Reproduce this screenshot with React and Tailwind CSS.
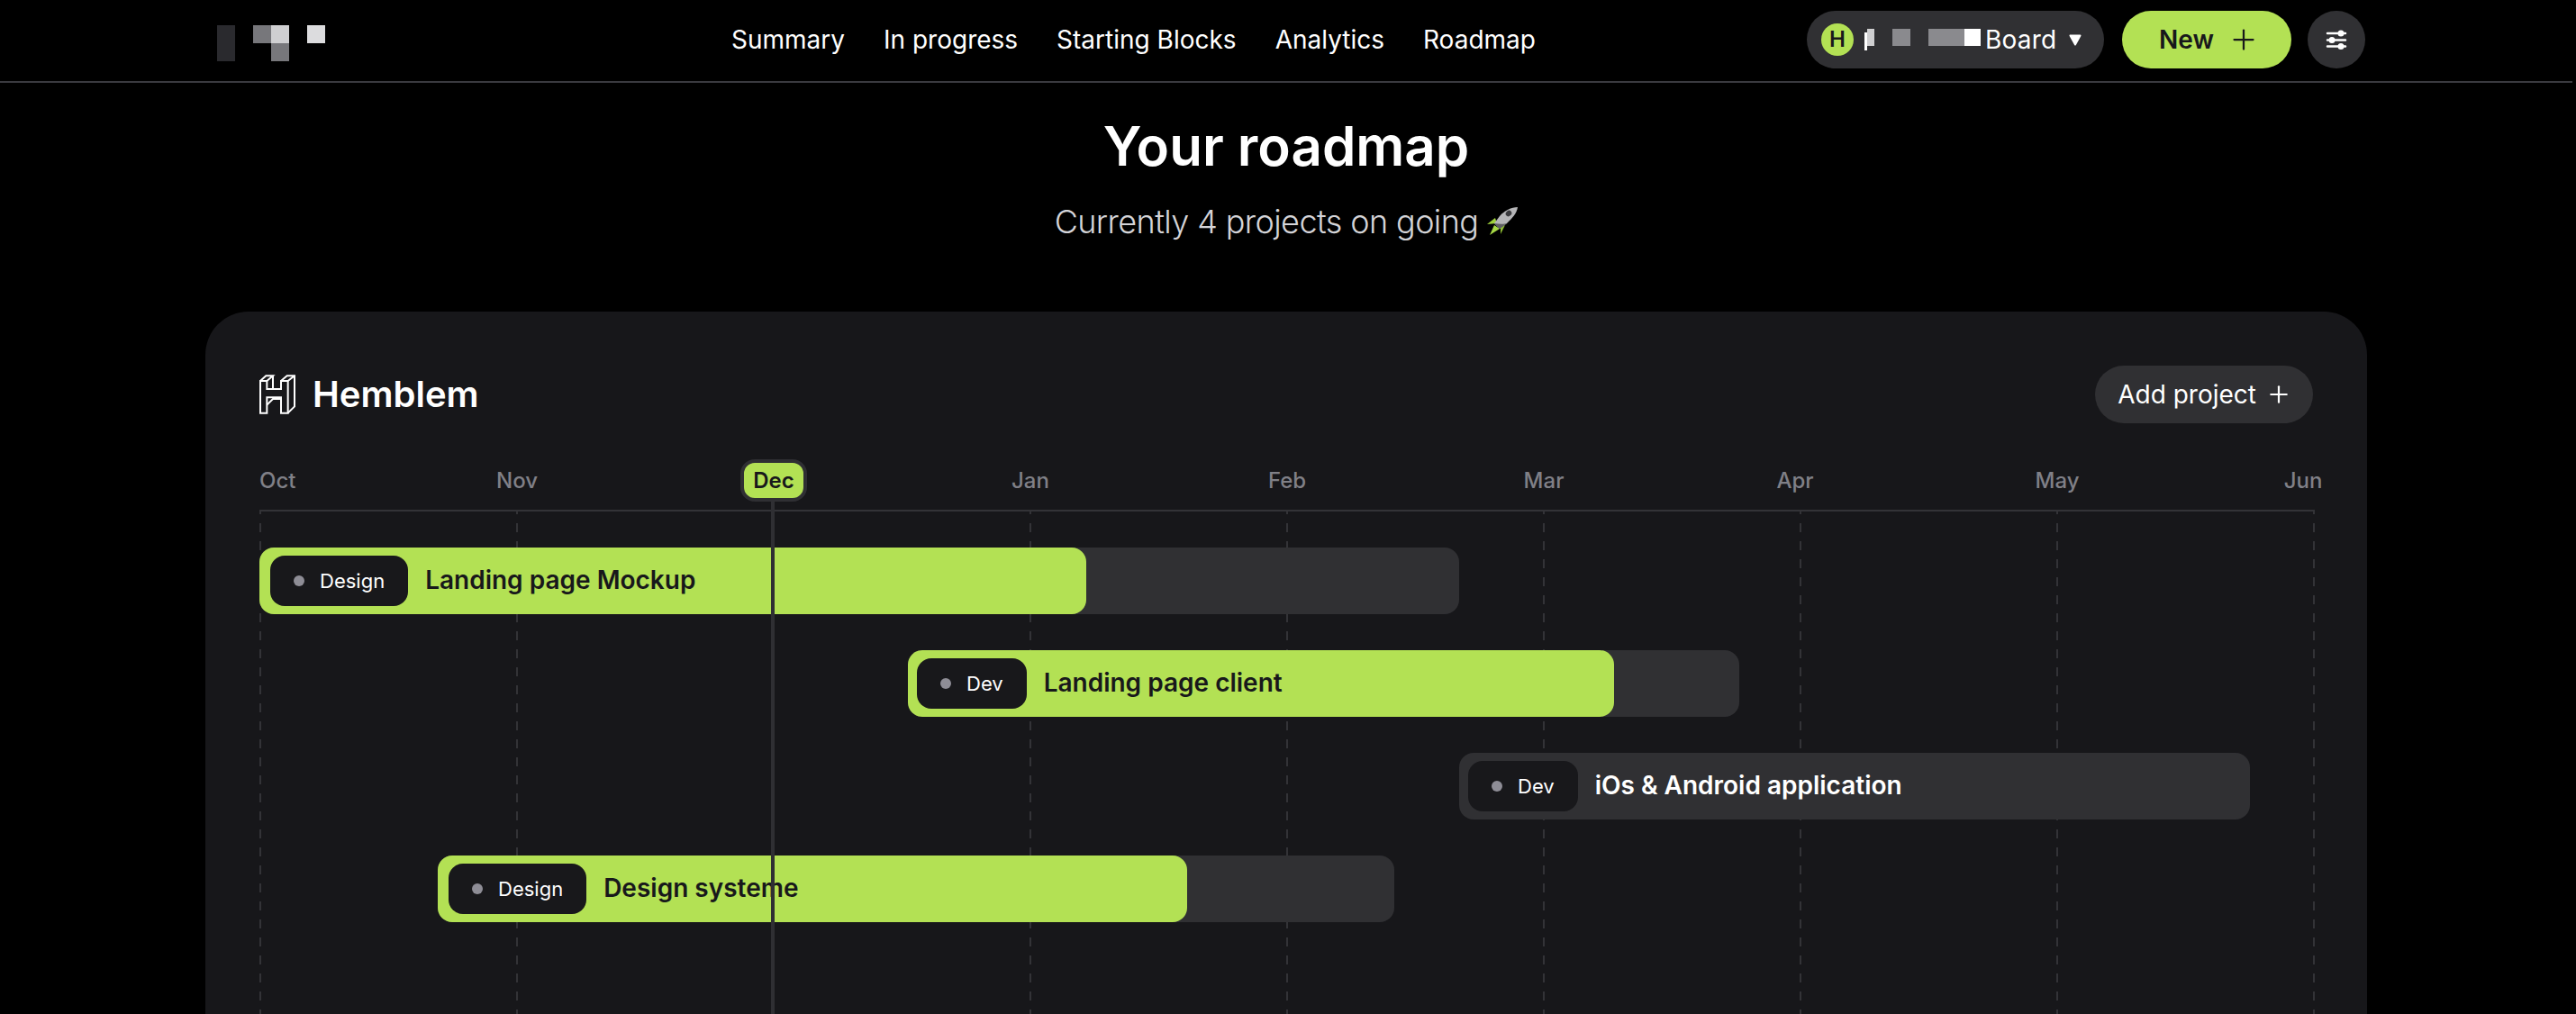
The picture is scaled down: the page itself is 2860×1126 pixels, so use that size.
import { Plus } from 'lucide-react'

const navLinks = ['Summary', 'In progress', 'Starting Blocks', 'Analytics', 'Roadmap']

const months = [
    { name: 'Oct', align: 'justify-start' },
    { name: 'Nov', align: 'justify-center' },
    { name: 'Dec', align: 'justify-center', current: true },
    { name: 'Jan', align: 'justify-center' },
    { name: 'Feb', align: 'justify-center' },
    { name: 'Mar', align: 'justify-center' },
    { name: 'Apr', align: 'justify-center -translate-x-1.5' },
    { name: 'May', align: 'justify-center' },
    { name: 'Jun', align: 'justify-center -translate-x-3' },
]

const projects = [
    { tag: 'Design', title: 'Landing page Mockup', start: 0, width: 1332, done: 918, inset: 'pl-3' },
    { tag: 'Dev', title: 'Landing page client', start: 720, width: 923, done: 784, inset: 'pl-2.5' },
    { tag: 'Dev', title: 'iOs & Android application', start: 1332, width: 878, done: 0, inset: 'pl-2.5' },
    { tag: 'Design', title: 'Design systeme', start: 198, width: 1062, done: 832, inset: 'pl-3' },
]

function Logo() {
    return (
        <div className="flex items-start mt-4 ml-[13px]">
            <div className="w-5 h-10 bg-[#2a2a2e]" />
            <div className="w-5 h-5 ml-5 bg-[#77777b]" />
            <div className="w-5">
                <div className="h-5 bg-[#cfcfd1]" />
                <div className="h-5 bg-[#77777b]" />
            </div>
            <div className="w-5 h-5 ml-5 bg-[#dcdcde]" />
        </div>
    )
}

function BoardSwitcher() {
    return (
        <button className="flex items-center h-16 w-[330px] pl-4 mr-0.5 rounded-full bg-[#303033] text-white text-[28px]">
            <span className="flex items-center justify-center w-9 h-9 rounded-full bg-[#b3e154] text-[#18181b] text-2xl font-semibold">H</span>
            {/* blurred-out workspace name */}
            <span className="flex items-start h-6 ml-3">
                <span className="w-[3px] h-5 mt-1 bg-white" />
                <span className="w-2 h-[19px] bg-[#cfcfd1]" />
                <span className="w-5 h-[19px] ml-5 bg-[#8a8a8e]" />
                <span className="w-10 h-[19px] ml-5 bg-[#8a8a8e]" />
                <span className="w-[18px] h-[19px] bg-white" />
            </span>
            <span className="ml-[5px] tracking-[0.2px]">Board</span>
            <svg className="ml-3.5" width="14" height="13" viewBox="0 0 14 13">
                <path d="M1.5 1.5h11L7 11.5z" fill="#fff" stroke="#fff" strokeWidth="2" strokeLinejoin="round" />
            </svg>
        </button>
    )
}

function SlidersIcon() {
    return (
        <svg width="24" height="24" viewBox="0 0 24 24" fill="none">
            <g stroke="#fff" strokeWidth="2.5" strokeLinecap="round">
                <path d="M2 5h20M2 12.5h20M2 19.5h20" />
            </g>
            <g fill="#fff">
                <circle cx="17" cy="5" r="3.5" />
                <circle cx="7" cy="12.5" r="3.5" />
                <circle cx="17" cy="19.5" r="3.5" />
            </g>
        </svg>
    )
}

function Header() {
    return (
        <header className="h-[92px] border-b-2 border-[#3a3a3f]">
            <div className="flex items-start w-[2400px] h-full mx-auto">
                <div className="w-[584px] mt-3">
                    <Logo />
                </div>
                <nav className="flex items-center gap-[43px] h-16 mt-3 text-[28px] text-white">
                    {navLinks.map((link) => (
                        <a key={link} href="#">{link}</a>
                    ))}
                </nav>
                <div className="flex items-center gap-[18px] ml-auto mt-3 mr-0.5">
                    <BoardSwitcher />
                    <button className="flex items-center gap-[15px] h-16 w-[188px] pl-[41px] rounded-full bg-[#b3e154] text-[#18181b] text-[28px] font-semibold">
                        New
                        <Plus className="w-9 h-9" strokeWidth={1.5} />
                    </button>
                    <button className="flex items-center justify-center w-16 h-16 rounded-full bg-[#303033]">
                        <SlidersIcon />
                    </button>
                </div>
            </div>
        </header>
    )
}

function RocketEmoji() {
    return (
        <svg className="ml-[9px] -mt-0.5" width="35" height="32" viewBox="0 0 35 32">
            <path d="M1 20l9-7 2 6z" fill="#9fd13c" />
            <path d="M4 32l5-11 6 4z" fill="#a6d845" />
            <path d="M16 31l0-7 5-3z" fill="#8fbd34" />
            <path d="M35 1C28 1 20 5 15 11L9 19l6 6 8-6C29 13 34 8 35 1z" fill="#b5b5b7" />
            <path d="M9 19l6 6 8-6c-3 1-8 1-14 0z" fill="#5f5f62" />
            <ellipse cx="25" cy="8" rx="3.5" ry="3" fill="#3b3b3e" transform="rotate(-40 25 8)" />
        </svg>
    )
}

function HemblemMark() {
    return (
        <svg width="40" height="44" viewBox="0 0 120 130" fill="none" stroke="#fff" strokeWidth="6">
            <path d="M3 20H25V47H72V20H95V127H72V75H25V127H3Z" />
            <path d="M3 20L22 3H45L25 20M72 20L92 3H117L95 20M117 3V105L95 127M45 3V47M25 100L45 80H72" />
        </svg>
    )
}

function MonthLabel({ month }) {
    return (
        <div className={`flex items-center w-0.5 h-[47px] whitespace-nowrap text-2xl font-medium ${month.align}`}>
            {month.current ? (
                <span className="shrink-0 flex items-center justify-center w-[74px] h-[47px] rounded-2xl border-4 border-[#2f2f33] bg-[#b3e154] text-[#18181b] font-semibold">
                    {month.name}
                </span>
            ) : (
                <span className="text-[#808087]">{month.name}</span>
            )}
        </div>
    )
}

function ProjectBar({ project }) {
    const hasProgress = project.done > 0

    return (
        <div
            className={`relative flex items-center h-[74px] rounded-2xl bg-[#303033] ${project.inset}`}
            style={{ marginLeft: project.start, width: project.width }}
        >
            {hasProgress && (
                <div className="absolute inset-y-0 left-0 rounded-2xl bg-[#b3e154]" style={{ width: project.done }} />
            )}
            <span className="relative flex items-center gap-[17px] h-14 px-[26px] rounded-2xl bg-[#18181b] text-[22px] text-white">
                <span className="w-3 h-3 rounded-full bg-[#8e8d96]" />
                {project.tag}
            </span>
            <span className={`relative ml-[19px] -mt-0.5 text-[28px] font-semibold ${hasProgress ? 'text-[#18181b]' : 'text-white'}`}>
                {project.title}
            </span>
        </div>
    )
}

function Timeline() {
    return (
        <div className="w-[2282px] mt-10">
            <div className="flex justify-between mb-[9px]">
                {months.map((month) => (
                    <MonthLabel key={month.name} month={month} />
                ))}
            </div>
            <div className="relative h-[600px] pt-10 border-t-2 border-[#333337]">
                {/* dashed month lines */}
                <div className="absolute inset-0 flex justify-between">
                    {months.map((month) => (
                        <div
                            key={month.name}
                            className="w-0.5 h-full bg-[repeating-linear-gradient(to_bottom,#333337_0,#333337_3px,transparent_3px,transparent_13px,#333337_13px,#333337_20px)]"
                        />
                    ))}
                </div>
                <div className="relative flex flex-col gap-10">
                    {projects.map((project) => (
                        <ProjectBar key={project.title} project={project} />
                    ))}
                </div>
                {/* today marker */}
                <div className="absolute left-[568px] -top-[11px] bottom-0 w-1 bg-[#2f2f33]" />
            </div>
        </div>
    )
}

export default function App() {
    return (
        <div className="h-[1126px] overflow-hidden bg-black font-['Inter',sans-serif]">
            <div className="w-[2856px]">
                <Header />
                <h1 className="mt-[34px] text-center text-[60px] leading-[72px] font-semibold text-white">Your roadmap</h1>
                <p className="flex items-center justify-center mt-6 h-12 text-4xl tracking-[-0.6px] font-light text-[#d4d4d8]">
                    Currently 4 projects on going
                    <RocketEmoji />
                </p>
                <section className="w-[2400px] h-[900px] mx-auto mt-[76px] pt-[60px] pl-[60px] rounded-[48px] bg-[#17171a]">
                    <div className="flex items-center justify-between w-[2280px] h-16">
                        <div className="flex items-center gap-[19px]">
                            <HemblemMark />
                            <span className="text-[40px] font-semibold text-white">Hemblem</span>
                        </div>
                        <button className="flex items-center gap-2.5 h-16 pl-[25px] pr-[23px] rounded-full bg-[#303033] text-[28px] text-white">
                            Add project
                            <Plus className="w-[30px] h-[30px]" strokeWidth={1.75} />
                        </button>
                    </div>
                    <Timeline />
                </section>
            </div>
        </div>
    )
}
